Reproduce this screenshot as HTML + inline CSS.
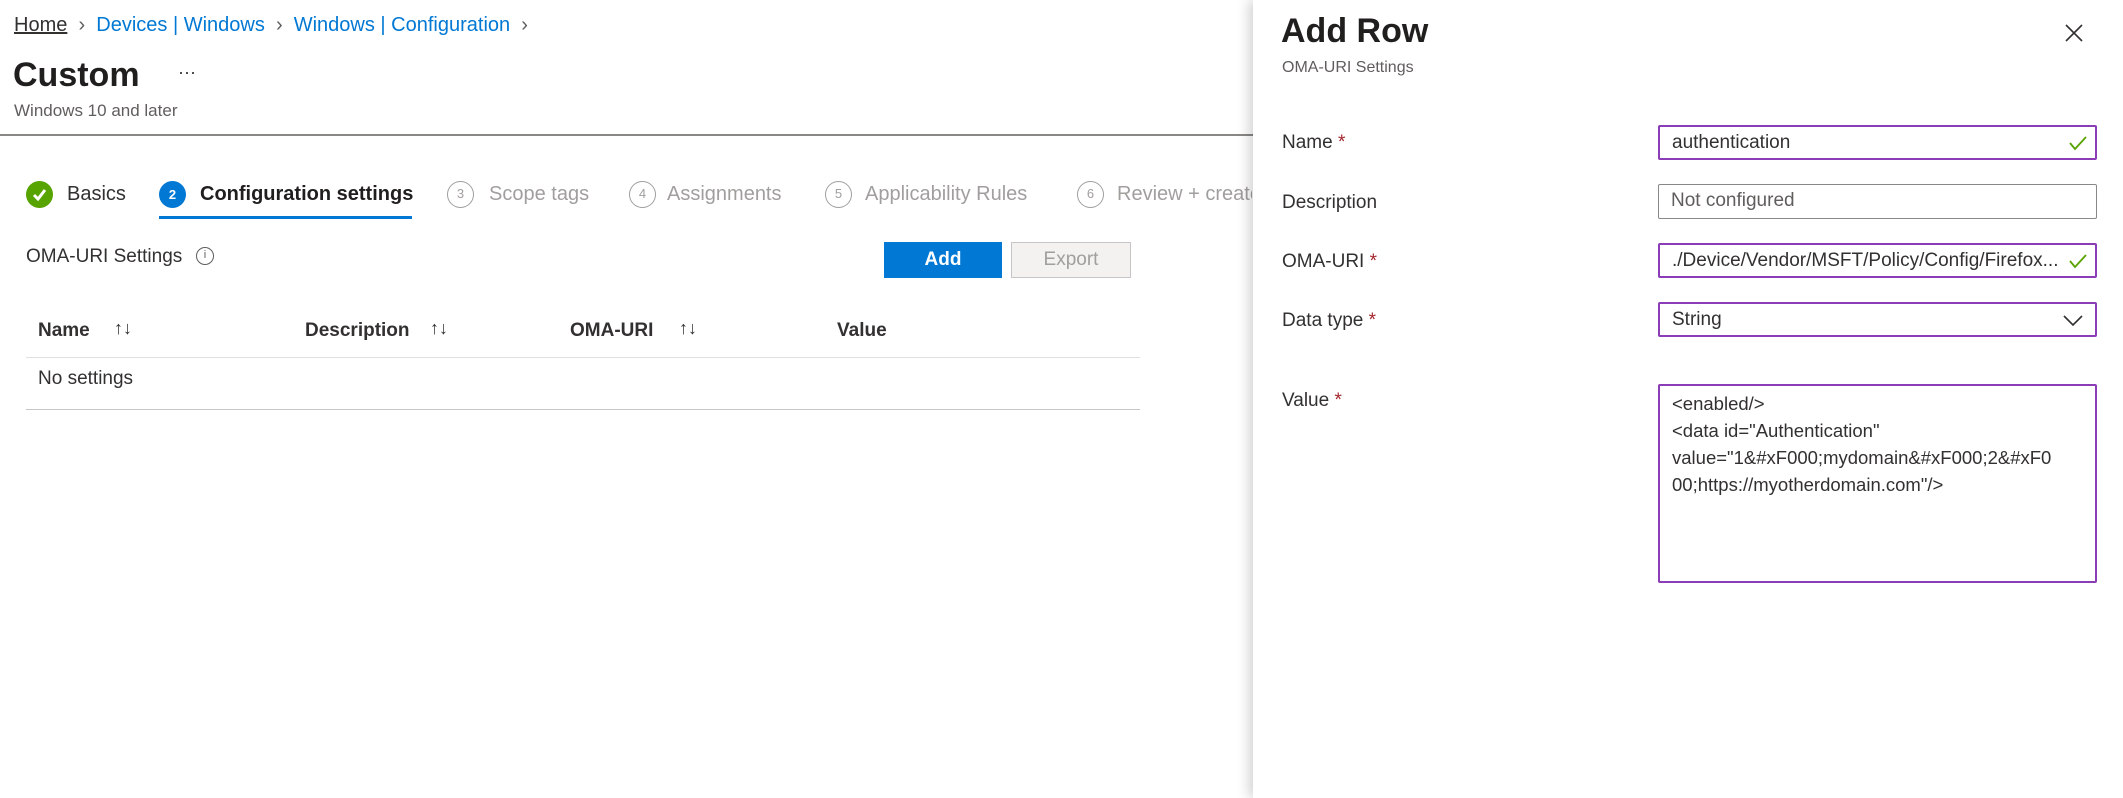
<!DOCTYPE html>
<html><head><meta charset="utf-8"><style>
*{box-sizing:border-box;margin:0;padding:0}
body{width:2123px;height:798px;background:#fff;font-family:"Liberation Sans",sans-serif;color:#323130;position:relative;overflow:hidden}
.a{position:absolute;white-space:nowrap}
.bc{color:#0078d4;font-size:20px;top:14px}
.circ{position:absolute;border-radius:50%;width:27px;height:27px;font-size:13px;text-align:center;line-height:24px}
.gray{border:1.5px solid #a19f9d;color:#a19f9d}
.step{font-size:20px;top:183px}
.th{font-size:19px;font-weight:bold;top:320px}
.inp{position:absolute;left:1658px;width:439px;border:2px solid #8a3db6;border-radius:2px;font-size:19px;padding-left:12px;line-height:32px}
.lbl{position:absolute;left:1282px;font-size:19px}
.req{color:#a4262c}
</style></head><body>
<div class="a bc" style="left:14px"><span style="color:#323130;text-decoration:underline;text-decoration-color:#323130">Home</span> <span style="color:#605e5c">&nbsp;›&nbsp;</span> Devices | Windows <span style="color:#605e5c">&nbsp;›&nbsp;</span> Windows | Configuration <span style="color:#605e5c">&nbsp;›</span></div>
<div class="a" style="left:13px;top:56px;font-size:34px;font-weight:600;color:#201f1e">Custom</div>
<div class="a" style="left:178px;top:62px;font-size:18px">···</div>
<div class="a" style="left:14px;top:101px;font-size:17px;color:#605e5c">Windows 10 and later</div>
<div class="a" style="left:0;top:134px;width:1253px;height:2px;background:#8a8886"></div>

<div class="circ" style="left:26px;top:181px;background:#57a300;color:#fff;line-height:27px"><svg width="27" height="27" viewBox="0 0 27 27" style="position:absolute;left:0;top:0"><path d="M8 14l4 4 7-9" stroke="#fff" stroke-width="3" fill="none"/></svg></div>
<div class="a step" style="left:67px">Basics</div>
<div class="circ" style="left:159px;top:181px;background:#0078d4;color:#fff;line-height:27px;font-weight:bold">2</div>
<div class="a step" style="left:200px;font-weight:600;color:#201f1e">Configuration settings</div>
<div class="a" style="left:159px;top:216px;width:253px;height:3px;background:#0078d4"></div>
<div class="circ gray" style="left:447px;top:181px">3</div><div class="a step" style="left:489px;color:#a19f9d">Scope tags</div>
<div class="circ gray" style="left:629px;top:181px">4</div><div class="a step" style="left:667px;color:#a19f9d">Assignments</div>
<div class="circ gray" style="left:825px;top:181px">5</div><div class="a step" style="left:865px;color:#a19f9d">Applicability Rules</div>
<div class="circ gray" style="left:1077px;top:181px">6</div><div class="a step" style="left:1117px;color:#a19f9d;width:135px;overflow:hidden">Review + create</div>

<div class="a" style="left:26px;top:246px;font-size:19px">OMA-URI Settings</div>
<div class="circ" style="left:196px;top:247px;width:18px;height:18px;border:1.5px solid #605e5c;font-size:11px;line-height:15px;color:#605e5c">i</div>
<div class="a" style="left:884px;top:242px;width:118px;height:36px;background:#0078d4;color:#fff;font-size:19px;font-weight:600;text-align:center;line-height:36px">Add</div>
<div class="a" style="left:1011px;top:242px;width:120px;height:36px;background:#f3f2f1;border:1px solid #c8c6c4;color:#a19f9d;font-size:19px;text-align:center;line-height:34px">Export</div>

<div class="a th" style="left:38px">Name</div><div class="a" style="left:114px;top:318px;font-size:18px">↑↓</div>
<div class="a th" style="left:305px">Description</div><div class="a" style="left:430px;top:318px;font-size:18px">↑↓</div>
<div class="a th" style="left:570px">OMA-URI</div><div class="a" style="left:679px;top:318px;font-size:18px">↑↓</div>
<div class="a th" style="left:837px">Value</div>
<div class="a" style="left:26px;top:357px;width:1114px;height:1px;background:#e1dfdd"></div>
<div class="a" style="left:38px;top:368px;font-size:19px">No settings</div>
<div class="a" style="left:26px;top:409px;width:1114px;height:1px;background:#c8c6c4"></div>

<div class="a" style="left:1253px;top:0;width:870px;height:798px;background:#fff;box-shadow:-4px 0 12px rgba(0,0,0,0.18)"></div>
<div class="a" style="left:1281px;top:12px;font-size:34px;font-weight:600;color:#201f1e">Add Row</div>
<div class="a" style="left:1282px;top:59px;font-size:16px;color:#605e5c">OMA-URI Settings</div>
<svg class="a" style="left:2064px;top:23px" width="20" height="20" viewBox="0 0 20 20"><path d="M2 2L18 18M18 2L2 18" stroke="#323130" stroke-width="1.6"/></svg>

<div class="lbl" style="top:132px">Name <span class="req">*</span></div>
<div class="lbl" style="top:192px">Description</div>
<div class="lbl" style="top:251px">OMA-URI <span class="req">*</span></div>
<div class="lbl" style="top:310px">Data type <span class="req">*</span></div>
<div class="lbl" style="top:390px">Value <span class="req">*</span></div>

<div class="inp" style="top:125px;height:35px">authentication<svg style="position:absolute;right:8px;top:8px" width="18" height="16"><path d="M1 8l5 6L17 2" stroke="#57a300" stroke-width="1.8" fill="none"/></svg></div>
<div class="inp" style="top:184px;height:35px;border:1px solid #8a8886;color:#605e5c">Not configured</div>
<div class="inp" style="top:243px;height:35px">./Device/Vendor/MSFT/Policy/Config/Firefox...<svg style="position:absolute;right:8px;top:8px" width="18" height="16"><path d="M1 8l5 6L17 2" stroke="#57a300" stroke-width="1.8" fill="none"/></svg></div>
<div class="inp" style="top:302px;height:35px">String<svg style="position:absolute;right:12px;top:11px" width="20" height="12"><path d="M1 1l9 9 9-9" stroke="#323130" stroke-width="1.6" fill="none"/></svg></div>
<div class="inp" style="top:384px;height:199px;white-space:normal;line-height:27px;padding-top:4px;padding-right:10px;font-size:18.5px;word-break:break-all">&lt;enabled/&gt;<br>&lt;data id="Authentication"<br>value="1&amp;#xF000;mydomain&amp;#xF000;2&amp;#xF0<br>00;https://myotherdomain.com"/&gt;</div>
</body></html>
